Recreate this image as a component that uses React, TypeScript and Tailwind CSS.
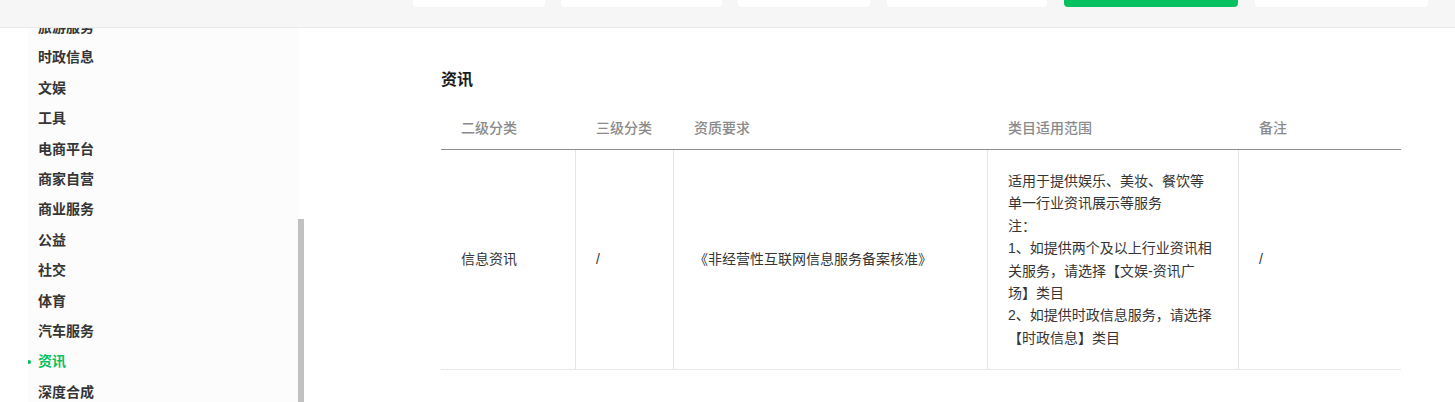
const font = "font-['Liberation_Sans','Noto_Sans_CJK_SC',sans-serif]";

const menu = [
  '旅游服务',
  '时政信息',
  '文娱',
  '工具',
  '电商平台',
  '商家自营',
  '商业服务',
  '公益',
  '社交',
  '体育',
  '汽车服务',
  '资讯',
  '深度合成',
];

const scopeLines = [
  '适用于提供娱乐、美妆、餐饮等',
  '单一行业资讯展示等服务',
  '注：',
  '1、如提供两个及以上行业资讯相',
  '关服务，请选择【文娱-资讯广',
  '场】类目',
  '2、如提供时政信息服务，请选择',
  '【时政信息】类目',
];

function TopBar() {
  return (
    <div className="fixed top-0 left-0 right-0 z-10 h-[28px] bg-[#f6f6f6] border-b border-[#e9e9e9]">
      <div className="flex items-start gap-4 pl-[413px]">
        <div className="h-[7px] w-[132px] rounded-b bg-white" />
        <div className="h-[7px] w-[161px] rounded-b bg-white" />
        <div className="h-[7px] w-[132px] rounded-b bg-white" />
        <div className="h-[7px] w-[160px] rounded-b bg-white ml-[1px]" />
        <div className="h-[7px] w-[174px] rounded-b bg-[#07c160] ml-[1px]" />
        <div className="h-[7px] w-[173px] rounded-b bg-white ml-[1px]" />
      </div>
    </div>
  );
}

function Sidebar() {
  return (
    <div className="flex shrink-0 pl-[28px]">
      <div className="w-[270px] h-[374px] overflow-hidden bg-[#fcfcfc]">
        <ul className="-mt-[15.6px]">
          {menu.map((item) => {
            const active = item === '资讯';
            return (
              <li
                key={item}
                className={`relative flex h-[30.4px] items-center pl-[10px] text-[14px] font-semibold ${
                  active ? 'text-[#07c160]' : 'text-[#353535]'
                }`}
              >
                {active && (
                  <span className="absolute left-[-1px] top-1/2 h-[4px] w-[4px] -translate-y-1/2 rounded-full bg-[#07c160]" />
                )}
                {item}
              </li>
            );
          })}
        </ul>
      </div>
      <div className="w-[6px] pt-[191px]">
        <div className="h-[200px] bg-[#c1c1c1]" />
      </div>
    </div>
  );
}

function QualificationTable() {
  return (
    <div className="w-[960px]">
      <div className="grid h-[42px] grid-cols-[135px_98px_314px_251px_162px] items-center border-b border-[#8c8c8c] text-[14px] font-medium text-[#8a8a8a]">
        <div className="pl-5">二级分类</div>
        <div className="pl-5">三级分类</div>
        <div className="pl-5">资质要求</div>
        <div className="pl-5">类目适用范围</div>
        <div className="pl-5">备注</div>
      </div>
      <div className="grid grid-cols-[135px_98px_314px_251px_162px] border-b border-[#e8e8e8] text-[14px] text-[#353535]">
        <div className="flex items-center border-r border-[#e6e6e6] pl-5">信息资讯</div>
        <div className="flex items-center border-r border-[#e6e6e6] pl-5">/</div>
        <div className="flex items-center border-r border-[#e6e6e6] pl-5">
          《非经营性互联网信息服务备案核准》
        </div>
        <div className="border-r border-[#e6e6e6] px-5 pt-[20px] pb-[20px] leading-[22.4px]">
          {scopeLines.map((line) => (
            <div key={line} className="whitespace-nowrap">
              {line}
            </div>
          ))}
        </div>
        <div className="flex items-center pl-5">/</div>
      </div>
    </div>
  );
}

export default function App() {
  return (
    <div className={`${font} h-[402px] overflow-hidden bg-white`}>
      <TopBar />
      <div className="flex pt-[28px]">
        <Sidebar />
        <main className="pl-[137px] pt-[40px]">
          <h2 className="mb-4 h-[24px] text-[16px] font-bold leading-[24px] text-[#1a1a1a]">资讯</h2>
          <QualificationTable />
        </main>
      </div>
    </div>
  );
}
